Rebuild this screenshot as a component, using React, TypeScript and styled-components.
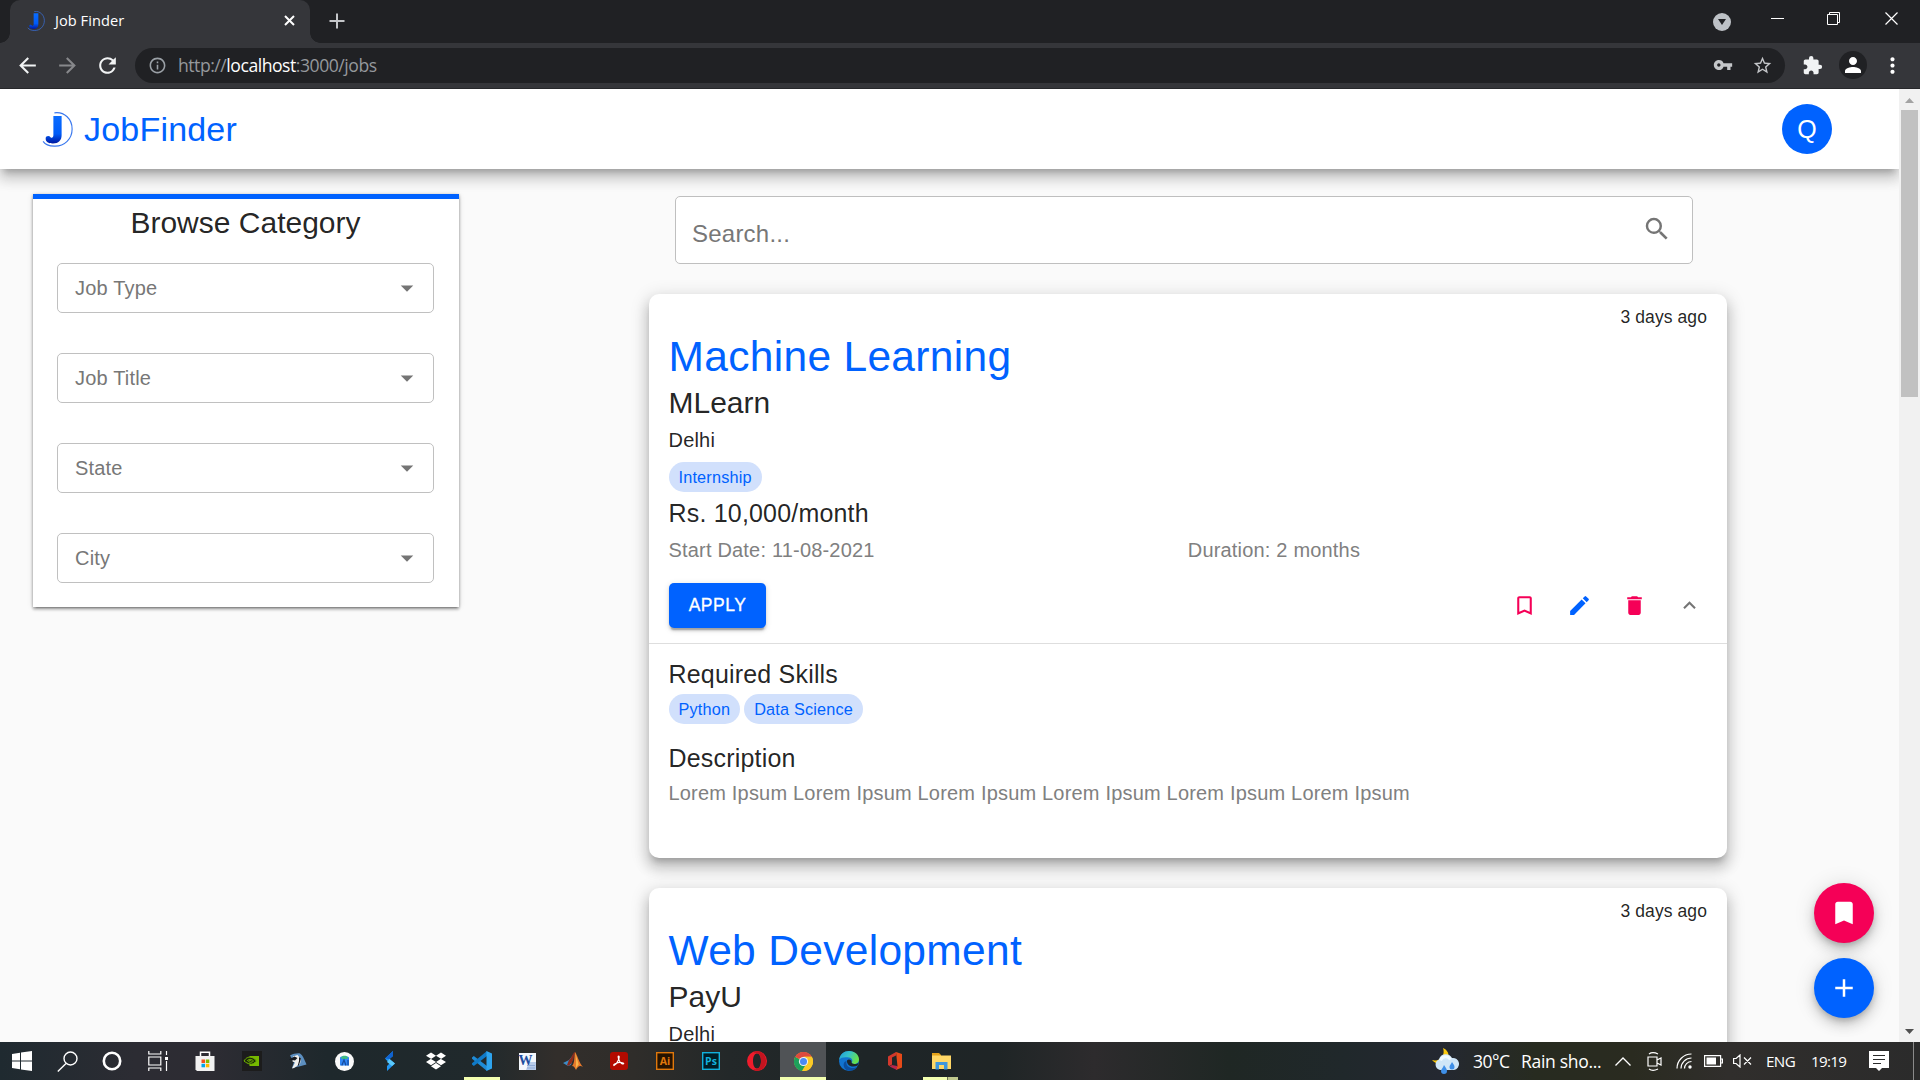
import React from "react";
import styled, { createGlobalStyle } from "styled-components";
import {
  MdAdd,
  MdArrowBack,
  MdArrowDropDown,
  MdArrowForward,
  MdBookmark,
  MdBookmarkBorder,
  MdDelete,
  MdEdit,
  MdExpandLess,
  MdExtension,
  MdInfoOutline,
  MdMoreVert,
  MdPerson,
  MdRefresh,
  MdSearch,
  MdStarBorder,
  MdVpnKey,
} from "react-icons/md";
import { FaDropbox } from "react-icons/fa";

const BLUE = "#0062ff";
const PINK = "#f50057";
const INK = "rgba(0, 0, 0, 0.87)";
const SHADOW_HIGH =
  "0 6.25px 6.25px -3.75px rgba(0,0,0,.2), 0 10px 12.5px 1.25px rgba(0,0,0,.14), 0 3.75px 17.5px 2.5px rgba(0,0,0,.12)";

const Global = createGlobalStyle`
  * { box-sizing: border-box; }
  body { margin: 0; overflow: hidden; background: #fafafa; font-family: "Liberation Sans", Arial, sans-serif; }
  svg { display: block; flex: none; }
`;

const Screen = styled.div`
  width: 1920px;
  height: 1080px;
  display: flex;
  flex-direction: column;
  overflow: hidden;
`;

/* ---------- Browser chrome ---------- */

const TabStrip = styled.div`
  height: 43px;
  flex: none;
  background: #202124;
  display: flex;
  align-items: flex-start;
  padding-left: 10px;
  font-family: "Open Sans", "Noto Sans", sans-serif;
`;

const Tab = styled.div`
  position: relative;
  width: 300px;
  height: 43px;
  background: #35363a;
  border-radius: 10px 10px 0 0;
  display: flex;
  align-items: center;
  padding: 0 15px 2px 17px;
  color: #fff;
  font-size: 14.6px;
  letter-spacing: 0.05px;

  &::before,
  &::after {
    content: "";
    position: absolute;
    bottom: 0;
    width: 10px;
    height: 10px;
  }
  &::before {
    left: -10px;
    background: radial-gradient(circle at 0 0, transparent 9.5px, #35363a 10px);
  }
  &::after {
    right: -10px;
    background: radial-gradient(circle at 100% 0, transparent 9.5px, #35363a 10px);
  }
`;

const TabTitle = styled.span`
  flex: 1;
  margin: -1px 0 0 10px;
`;

const NewTab = styled.div`
  margin: 13px 0 0 19px;
`;

const WindowControls = styled.div`
  margin-left: auto;
  height: 37px;
  display: flex;
  align-items: center;
  padding-right: 22px;
`;

const DropBadge = styled.div`
  width: 18px;
  height: 18px;
  border-radius: 50%;
  background: #bdc1c6;
  margin: 6px 40px 0 0;
  display: flex;
  align-items: center;
  justify-content: center;
`;

const Toolbar = styled.div`
  height: 46px;
  flex: none;
  background: #35363a;
  border-bottom: 1px solid #27282b;
  display: flex;
  align-items: center;
  padding: 0 15px 1px;
  color: #fff;
`;

const NavIcon = styled.div<{ $dim?: boolean }>`
  width: 24px;
  margin-right: 16px;
  color: ${(p) => (p.$dim ? "#87888b" : "#f1f3f4")};
`;

const AddressBar = styled.div`
  width: 1650px;
  height: 35px;
  border-radius: 18px;
  background: #202124;
  display: flex;
  align-items: center;
  gap: 0;
  padding: 0 12px 0 13px;
  color: #9aa0a6;
`;

const Url = styled.div`
  flex: 1;
  margin-left: 11px;
  color: #95989c;
  font: 17.6px "Open Sans", "Noto Sans", sans-serif;
  letter-spacing: -0.47px;
  white-space: nowrap;
  b {
    font-weight: 400;
    color: #fff;
  }
`;

const StarSlot = styled.div`
  margin-left: 19px;
`;

const ExtensionSlot = styled.div`
  margin-left: 17px;
`;

const Profile = styled.div`
  width: 28px;
  height: 28px;
  border-radius: 50%;
  background: #202124;
  margin: 0 13px 0 16px;
  display: flex;
  align-items: center;
  justify-content: center;
`;

/* ---------- Page ---------- */

const Viewport = styled.div`
  height: 953px;
  flex: none;
  display: flex;
  overflow: hidden;
`;

const Page = styled.div`
  position: relative;
  width: 1899px;
  height: 953px;
  overflow: hidden;
  background: #fafafa;
`;

const AppHeader = styled.header`
  position: relative;
  z-index: 2;
  height: 80px;
  background: #fff;
  box-shadow: ${SHADOW_HIGH};
  display: flex;
  align-items: center;
  padding: 0 67px 0 42px;
`;

const Brand = styled.div`
  flex: 1;
  margin-left: 11px;
  color: ${BLUE};
  font-size: 34px;
  letter-spacing: 0.2px;
`;

const Avatar = styled.div`
  width: 50px;
  height: 50px;
  border-radius: 50%;
  background: ${BLUE};
  color: #fff;
  font-size: 25px;
  display: flex;
  align-items: center;
  justify-content: center;
`;

const Content = styled.main`
  display: flex;
  align-items: flex-start;
  padding-left: 33px;
`;

const Sidebar = styled.aside`
  width: 426px;
  height: 413px;
  margin: 25px 190px 0 0;
  border-top: 5px solid ${BLUE};
  background: #fff;
  padding: 4px 25px 0 24px;
  display: flex;
  flex-direction: column;
  gap: 40px;
  box-shadow: 0 3.75px 1.25px -2.5px rgba(0,0,0,.2), 0 2.5px 2.5px 0 rgba(0,0,0,.14), 0 1.25px 6.25px 0 rgba(0,0,0,.12),
    0 1px 3px rgba(0,0,0,.3);
`;

const SidebarTitle = styled.h2`
  margin: 0 0 -20px;
  font-size: 30px;
  line-height: 40px;
  font-weight: 400;
  color: ${INK};
  text-align: center;
`;

const SelectBox = styled.div`
  height: 50px;
  flex: none;
  border: 1px solid #c0c0c0;
  border-radius: 5px;
  display: flex;
  align-items: center;
  justify-content: space-between;
  padding: 0 11px 0 17px;
  font-size: 20px;
  letter-spacing: 0.00938em;
  color: #777;
`;

const Feed = styled.section`
  width: 1078px;
  display: flex;
  flex-direction: column;
`;

const SearchBox = styled.div`
  width: 1018px;
  height: 68px;
  margin: 27px 0 30px 26px;
  border: 1px solid #bfbfbf;
  border-radius: 5px;
  background: #fff;
  display: flex;
  align-items: center;
  justify-content: space-between;
  padding: 0 20px 0 16px;
  font-size: 24px;
  letter-spacing: 0.00938em;
  line-height: 28px;
  color: #777;
  span {
    margin-top: 8px;
  }
  svg {
    margin-bottom: 2px;
  }
`;

const Card = styled.article`
  flex: none;
  height: 564px;
  margin-bottom: 30px;
  padding-top: 11px;
  border-radius: 10px;
  background: #fff;
  box-shadow: ${SHADOW_HIGH};
  color: ${INK};
`;

const Block = styled.div`
  padding: 0 20px 0 19.5px;
`;

const Posted = styled.div`
  font-size: 17.5px;
  line-height: 25px;
  letter-spacing: 0.005em;
  text-align: right;
`;

const JobTitle = styled.h1`
  margin: 1px 0 -1px;
  font-size: 42.5px;
  line-height: 52.5px;
  font-weight: 400;
  letter-spacing: 0.00735em;
  color: ${BLUE};
`;

const Company = styled.div`
  font-size: 30px;
  line-height: 40px;
`;

const Body = styled.div<{ $muted?: boolean; $top?: number }>`
  flex: 1;
  margin-top: ${(p) => p.$top ?? 0}px;
  font-size: 20px;
  line-height: 30px;
  letter-spacing: 0.00938em;
  color: ${(p) => (p.$muted ? "#808080" : "inherit")};
`;

const Subhead = styled.div<{ $top?: number }>`
  margin-top: ${(p) => p.$top ?? 0}px;
  font-size: 25px;
  line-height: 40px;
  letter-spacing: 0.0075em;
`;

const Chips = styled.div<{ $top?: number }>`
  display: flex;
  gap: 4px;
  margin-top: ${(p) => p.$top ?? 0}px;
`;

const Chip = styled.span`
  height: 30px;
  padding: 0 10px;
  border-radius: 15px;
  background: #d1e0fc;
  color: ${BLUE};
  font-size: 16.25px;
  letter-spacing: 0.18px;
  line-height: 30px;
`;

const Row = styled.div`
  display: flex;
`;

const Actions = styled.div`
  display: flex;
  align-items: center;
  margin-top: 18px;
  padding: 0 25px 0 20px;
  height: 45px;
`;

const ApplyButton = styled.button`
  width: 97px;
  height: 45px;
  margin: 0 auto 0 0;
  padding: 0;
  border: 0;
  border-radius: 5px;
  background: ${BLUE};
  color: #fff;
  font: 500 17.5px "Liberation Sans", Arial, sans-serif;
  letter-spacing: 0.02857em;
  -webkit-text-stroke: 0.3px #fff;
  box-shadow: 0 3.75px 1.25px -2.5px rgba(0,0,0,.2), 0 2.5px 2.5px rgba(0,0,0,.14), 0 1.25px 6.25px rgba(0,0,0,.12);
`;

const ActionIcon = styled.div<{ $color: string }>`
  width: 25px;
  margin-left: 30px;
  color: ${(p) => p.$color};
`;

const Details = styled.div`
  margin-top: 15px;
  padding: 10px 20px 0 19.5px;
  border-top: 1px solid #dedede;
`;

const FabStack = styled.div`
  position: absolute;
  z-index: 3;
  right: 25px;
  bottom: 24px;
  display: flex;
  flex-direction: column;
  gap: 15px;
`;

const Fab = styled.div<{ $color: string }>`
  width: 60px;
  height: 60px;
  border-radius: 50%;
  background: ${(p) => p.$color};
  color: #fff;
  display: flex;
  align-items: center;
  justify-content: center;
  box-shadow: 0 3.75px 6.25px -1.25px rgba(0,0,0,.2), 0 7.5px 12.5px 0 rgba(0,0,0,.14), 0 1.25px 22.5px 0 rgba(0,0,0,.12);
`;

const Scrollbar = styled.div`
  width: 21px;
  background: #f1f1f1;
  display: flex;
  flex-direction: column;
  align-items: center;
  padding: 9px 0 8px;
`;

const Thumb = styled.div`
  width: 17px;
  height: 287px;
  margin: 7px 0 auto;
  background: #c1c1c1;
`;

/* ---------- Taskbar ---------- */

const Taskbar = styled.footer`
  height: 38px;
  flex: none;
  display: flex;
  color: #fff;
  background: linear-gradient(
    90deg,
    #1f2a30 0,
    #2c2c33 7%,
    #2d2c33 11%,
    #1e282c 17%,
    #20292c 25%,
    #322e2b 29%,
    #2f2d2a 33%,
    #232829 38%,
    #1e2527 45%,
    #1f2526 52%,
    #2d2b2d 57%,
    #1f2724 64%,
    #20282b 70%,
    #242831 75%,
    #272b20 80%,
    #2a2b20 85%,
    #302e2c 90%,
    #2b2b2b 100%
  );
`;

const TaskItem = styled.div<{ $w?: number; $active?: boolean; $open?: boolean }>`
  width: ${(p) => p.$w ?? 46}px;
  height: 38px;
  display: flex;
  align-items: center;
  justify-content: center;
  background: ${(p) => (p.$active ? "#505356" : "transparent")};
  box-shadow: ${(p) => (p.$open || p.$active ? "inset 0 -3px #f3ffb0" : "none")};
`;

const ExplorerItem = styled(TaskItem)`
  box-shadow: none;
  background: linear-gradient(90deg, transparent 5px, #f3ffb0 5px 29px, #6d7350 29px 30px, #c0c98e 30px 40px, transparent 40px)
    0 100% / 100% 3px no-repeat;
`;

const Tray = styled.div`
  margin-left: auto;
  width: 488px;
  display: flex;
  align-items: center;
  font-family: "Open Sans", "Noto Sans", sans-serif;
  white-space: nowrap;
`;

const TrayText = styled.span<{ $size: number; $w: number; $track: number }>`
  width: ${(p) => p.$w}px;
  flex: none;
  font-size: ${(p) => p.$size}px;
  letter-spacing: ${(p) => p.$track}px;
  line-height: 24px;
`;

const TrayIcon = styled.div<{ $w: number }>`
  width: ${(p) => p.$w}px;
  flex: none;
  display: flex;
  justify-content: flex-start;
`;

const PeekLine = styled.div`
  width: 1px;
  height: 38px;
  margin-left: 24px;
  background: #8a8a8a;
`;

const Logo = ({ width, height }: { width: number; height: number }) => (
  <svg width={width} height={height} viewBox="0 0 30 34">
    <defs>
      <linearGradient id="jg" x1="0" y1="0" x2="0" y2="1">
        <stop offset="0" stopColor="#0a6cff" />
        <stop offset=".65" stopColor="#005cf8" />
        <stop offset="1" stopColor="#0018a0" />
      </linearGradient>
    </defs>
    <path d="M12 .8C22-.5 29.200 7 29.200 16.500S22 33.500 12 33.200C7 33 3 31.500 1 28.500" fill="none" stroke="#3a78ee" strokeWidth="1.100" />
    <path d="M11 4h8v18.500c0 5-3 8-8.500 8-4.500 0-7-1.500-7-4.800 0-2.600 3.500-3 4.700-1.200 1 1 2.800.8 2.800-1.800z" fill="url(#jg)" />
  </svg>
);

const s = { fill: "none", stroke: "#fff" };

const StartIcon = () => (
  <svg width="20" height="20" viewBox="0 0 20 20" fill="#fff">
    <path d="M0 3l8-1.200v7.700H0zM9 1.600L20 0v9.500H9zM0 10.500h8v7.700L0 17zM9 10.500h11V20L9 18.400z" />
  </svg>
);
const FindIcon = () => (
  <svg width="21" height="21" viewBox="0 0 21 21" {...s} strokeWidth="1.400">
    <circle cx="13.500" cy="7.500" r="6.500" />
    <path d="M9 12.500L.8 20.500" />
  </svg>
);
const CortanaIcon = () => (
  <svg width="20" height="20" viewBox="0 0 20 20" {...s} strokeWidth="2.600">
    <circle cx="10" cy="10" r="8.200" />
  </svg>
);
const TaskViewIcon = () => (
  <svg width="20" height="20" viewBox="0 0 20 20" {...s} strokeWidth="1.200">
    <path d="M.8 0v3h12V0M.8 20v-3h12v3M.8 6h12v8H.8zM18.500 0v4M18.500 10v10" />
    <path d="M17 6h3v3h-3z" fill="#fff" stroke="none" />
  </svg>
);
const StoreIcon = () => (
  <svg width="20" height="20" viewBox="0 0 20 20">
    <path d="M5.500 5V1.200h9V5" {...s} strokeWidth="1.500" />
    <path d="M.5 5h19v15H2L.5 18.500z" fill="#f2f2f2" />
    <path d="M6.500 8.500H10V12H6.500z" fill="#f25022" />
    <path d="M10.800 8.500h3.500V12h-3.500z" fill="#7fba00" />
    <path d="M6.500 12.800H10v3.500H6.500z" fill="#00a4ef" />
    <path d="M10.800 12.800h3.500v3.500h-3.500z" fill="#ffb900" />
  </svg>
);
const NvidiaIcon = () => (
  <svg width="20" height="20" viewBox="0 0 20 20">
    <path d="M0 0h20v20H0z" fill="#1c1c1c" />
    <path d="M7.500 5H17v10H7.500z" fill="#76b900" />
    <path d="M2 10c2-3.500 5-4.500 8-3.500 2 .7 3 2 4.500 3.500-2 2.500-4 3.500-6.500 3S4 11.500 2 10z" fill="#1c2b08" stroke="#76b900" />
    <path d="M5 10c1.500-2 4.500-2.300 6.500 0-2 2-4.500 1.500-5 0 1-.9 2-.9 3 0" fill="none" stroke="#76b900" />
  </svg>
);
const BirdIcon = () => (
  <svg width="18" height="16" viewBox="0 0 18 16">
    <path d="M1 2.500C4 1 8 0 11 .5c2.500 1.500 4 5 6.500 11L12 13l-9 2 2-6z" fill="#5c8fc0" />
    <path d="M4 3.500L8.500 2l3.500 4-1 5-6 4-2 .5 3-6-2.500-1z" fill="#f1f1ee" />
    <path d="M0 6.500l5.500-3 3 1.500L6 7.500zM10 4l2 1.500L10 12l-1.500 1.500L10 8z" fill="#161a20" />
  </svg>
);
const AndroidStudioIcon = () => (
  <svg width="19" height="19" viewBox="0 0 19 19">
    <circle cx="9.500" cy="9.500" r="9.500" fill="#fafafa" />
    <path d="M5 5.500c2-2 7-2 9 0v8H5z" fill="#2f86f6" />
    <path d="M6 5.500c1-2.500 6-2.500 7 0l-1 1.500H7z" fill="#3dbb84" />
    <path d="M6.800 13.500L9 8l2 5.500M13 8v5.500" fill="none" stroke="#174a9c" strokeWidth="1.200" />
  </svg>
);
const BoltIcon = () => (
  <svg width="12" height="20" viewBox="0 0 12 20">
    <path d="M9 0v5L5.500 8l5.500 4.500L3 20v-5l2.500-2.500L1 7.500z" fill="#2196f3" />
    <path d="M1 7.500L9 0v5L5.500 8z" fill="#0f62d0" />
    <path d="M5.500 8L11 12.500l-3 2.500-5-4z" fill="#5cc9fa" />
  </svg>
);
const CodeIcon = () => (
  <svg width="20" height="20" viewBox="0 0 20 20">
    <path d="M0 6.500l1.800-1.400L15 15v5L0 7.800z" fill="#1f8bd6" />
    <path d="M0 13.500l1.800 1.400L15 5V0L0 12.200z" fill="#0f7ac8" />
    <path d="M14.500 0L20 2.500v15L14.500 20z" fill="#2ea4ee" />
  </svg>
);
const WordIcon = () => (
  <svg width="19" height="19" viewBox="0 0 19 19">
    <path d="M1 1h17v17H1z" fill="#f4f7fc" />
    <path d="M11 10h7v8H8z" fill="#b9cdea" />
    <path d="M9 13.500h8M9 16h8" stroke="#8fabd8" />
    <text x="0.500" y="12.500" fontFamily="Liberation Serif, serif" fontWeight="700" fontSize="14" fill="#1f4fa0">
      W
    </text>
  </svg>
);
const MatlabIcon = () => (
  <svg width="20" height="18" viewBox="0 0 20 18">
    <path d="M0 11l6-3 5-6-3 11-3 1z" fill="#3d8bc4" />
    <path d="M6 8c3-2 4-8 6-8-1 5-2 12-7 14l-1-1z" fill="#8b2b1c" />
    <path d="M12 0c2 2 4 11 8 15-3-2-5-1-7 3-1-2-2-4-4-4 3-3 2-9 3-14z" fill="#e6792b" />
    <path d="M12.300 1c1 5 1 10 .4 16 1-2 2-4 3-4.500z" fill="#f7b64b" />
  </svg>
);
const AcrobatIcon = () => (
  <svg width="18" height="18" viewBox="0 0 18 18">
    <rect width="18" height="18" rx="3" fill="#b30b00" />
    <path d="M8.500 4c2 0-1 8-4.500 9.500-1.500-1 4-3.500 7-3 4 .7 3 2.300.5 1C9 10 7.500 4 8.500 4z" {...s} strokeWidth="1.200" />
  </svg>
);
const AdobeTile = ({ label, color, bg }: { label: string; color: string; bg: string }) => (
  <svg width="18" height="18" viewBox="0 0 18 18">
    <rect x=".7" y=".7" width="16.600" height="16.600" fill={bg} stroke={color} strokeWidth="1.400" />
    <text x="9" y="12.700" textAnchor="middle" fontFamily="Open Sans, sans-serif" fontWeight="700" fontSize="10.500" fill={color}>
      {label}
    </text>
  </svg>
);
const OperaIcon = () => (
  <svg width="20" height="20" viewBox="0 0 20 20">
    <path fillRule="evenodd" d="M10 0a10 10 0 100 20 10 10 0 000-20zm0 2.500c2.500 0 4 3.300 4 7.500s-1.500 7.500-4 7.500S6 14.200 6 10s1.500-7.500 4-7.500z" fill="#ee1c2c" />
    <path d="M10 0c12 1 12 19 0 20-2 0-3-1-3.500-2C12 19.500 14 15 14 10S12 .8 6.500 2C7.500.8 8.500 0 10 0z" fill="#c4141f" />
  </svg>
);
const ChromeIcon = () => (
  <svg width="19" height="19" viewBox="0 0 20 20">
    <circle cx="10" cy="10" r="10" fill="#fbc926" />
    <path d="M10 10L1.300 5A10 10 0 008.500 19.900L13 12z" fill="#1da05b" />
    <path d="M10 10L1.300 5A10 10 0 0118.700 5H10z" fill="#dd4b3e" />
    <path d="M10 5h8.700A10 10 0 018.500 19.900L14 12z" fill="#fbc926" />
    <circle cx="10" cy="10" r="4.800" fill="#f3f3f3" />
    <circle cx="10" cy="10" r="3.700" fill="#4a8af4" />
  </svg>
);
const EdgeIcon = () => (
  <svg width="20" height="20" viewBox="0 0 20 20">
    <defs>
      <linearGradient id="eg" x1="0" y1="0" x2="1" y2=".4">
        <stop offset="0" stopColor="#1f9ad8" />
        <stop offset=".5" stopColor="#35c1c9" />
        <stop offset="1" stopColor="#66e04e" />
      </linearGradient>
    </defs>
    <circle cx="10" cy="10" r="10" fill="#1173cf" />
    <path d="M0 9C1 3 5 0 10 0c6 0 10 4 10 8.500 0 3-2.500 4.500-5 4.500-2 0-3-1-2-2 .7-1 .5-4-3-4.500C6 6 2 6 0 9z" fill="url(#eg)" />
    <path d="M7.500 10c-1 4 2 7 6 7 2.500 0 4-.8 5-1.800C16 21 7 21.500 5 16c-1-3 0-5.500 2.500-6z" fill="#0b4e9e" />
    <path d="M8 9.500c1.500-2 4-1 4.500.5-.5 2 1 3 3 3 2 0 3-.5 4-1.300l-.8 2.800c-3 1.500-7.500 1.500-9.500-1-1-1.300-1.400-2.700-1.200-4z" fill="#1e2527" />
  </svg>
);
const OfficeIcon = () => (
  <svg width="14" height="18" viewBox="0 0 14 18">
    <path d="M0 4.500L8 0v3.500L4 5.500v7L1.500 14 0 13z" fill="#d2382c" />
    <path d="M8 0l6 2v13.500L8 18V14.500h1.500z" fill="#e64a19" />
    <path d="M1.500 14.500l2.500-1.500 5 1V18z" fill="#b8264a" />
  </svg>
);
const FolderIcon = () => (
  <svg width="19" height="18" viewBox="0 0 19 18">
    <path d="M0 1h7l2 2v4H0z" fill="#e3a21a" />
    <path d="M0 3.500h19V17H0z" fill="#ffd766" />
    <path d="M3.500 17.500V10h12v7.500H12V13H7v4.500z" fill="#3f97dd" />
  </svg>
);
const WeatherIcon = () => (
  <svg width="28" height="26" viewBox="0 0 28 26">
    <path d="M11 0c7 3 7 10 2 14-4 3-10 2-13-2 4 1 8 0 10-3s2-6 1-9z" fill="#f9c80e" />
    <path d="M8 22a5.500 5.500 0 01-1-10.500 7 7 0 0113-1.500 6 6 0 012 12z" fill="#cfe6f8" />
    <path d="M8.500 12.500a5.500 5.500 0 0110-1" stroke="#eef8ff" strokeWidth="3" fill="none" />
    <path d="M12 17c2 3 3 4 3 6a3 3 0 01-6 0c0-2 2-3 3-6zM20 14c1.500 2.500 2.500 3 2.500 5a2.500 2.500 0 01-5 0c0-2 1.500-2.500 2.500-5z" fill="#3f8fe8" />
  </svg>
);

type Offer = {
  kind: string;
  pay: string;
  start: string;
  duration: string;
  skills: string[];
  description: string;
};
type Job = { title: string; company: string; city: string; offer?: Offer };
const jobs: Job[] = [
  {
    title: "Machine Learning",
    company: "MLearn",
    city: "Delhi",
    offer: {
      kind: "Internship",
      pay: "Rs. 10,000/month",
      start: "11-08-2021",
      duration: "2 months",
      skills: ["Python", "Data Science"],
      description: "Lorem Ipsum Lorem Ipsum Lorem Ipsum Lorem Ipsum Lorem Ipsum Lorem Ipsum",
    },
  },
  { title: "Web Development", company: "PayU", city: "Delhi" },
];

const JobCard = ({ title, company, city, offer }: Job) => (
  <Card>
    <Block>
      <Posted>3 days ago</Posted>
      <JobTitle>{title}</JobTitle>
      <Company>{company}</Company>
      <Body $top={2.5}>{city}</Body>
      {offer && (
        <>
          <Chips $top={7}>
            <Chip>{offer.kind}</Chip>
          </Chips>
          <Subhead $top={1}>{offer.pay}</Subhead>
          <Row>
            <Body $muted $top={2}>{`Start Date: ${offer.start}`}</Body>
            <Body $muted $top={2}>{`Duration: ${offer.duration}`}</Body>
          </Row>
        </>
      )}
    </Block>
    {offer && (
      <>
        <Actions>
          <ApplyButton>APPLY</ApplyButton>
          <ActionIcon $color={PINK}><MdBookmarkBorder size={25} /></ActionIcon>
          <ActionIcon $color={BLUE}><MdEdit size={25} /></ActionIcon>
          <ActionIcon $color={PINK}><MdDelete size={25} /></ActionIcon>
          <ActionIcon $color="#757575"><MdExpandLess size={25} /></ActionIcon>
        </Actions>
        <Details>
          <Subhead>Required Skills</Subhead>
          <Chips>
            {offer.skills.map((skill) => (
              <Chip key={skill}>{skill}</Chip>
            ))}
          </Chips>
          <Subhead $top={14}>Description</Subhead>
          <Body $muted>{offer.description}</Body>
        </Details>
      </>
    )}
  </Card>
);

export default function App() {
  return (
    <Screen>
      <Global />
      <TabStrip>
        <Tab>
          <Logo width={18} height={20} />
          <TabTitle>Job Finder</TabTitle>
          <svg width="11" height="11" viewBox="0 0 11 11" {...s} strokeWidth="2">
            <path d="M1 1l9 9M10 1l-9 9" />
          </svg>
        </Tab>
        <NewTab>
          <svg width="16" height="16" viewBox="0 0 16 16" stroke="#c4c6c9" strokeWidth="2">
            <path d="M8 .5v15M.5 8h15" />
          </svg>
        </NewTab>
        <WindowControls>
          <DropBadge>
            <svg width="8" height="6" viewBox="0 0 8 6"><path d="M0 0h8L4 6z" fill="#202124" /></svg>
          </DropBadge>
          <svg width="13" height="1" viewBox="0 0 13 1"><path d="M0 0h13v1H0z" fill="#fff" /></svg>
          <svg width="56" height="13" viewBox="-43 0 56 13" {...s}>
            <path d="M.5 2.500h10v10H.5zM2.500 2.500v-2h10v10h-2" />
          </svg>
          <svg width="58" height="13" viewBox="-45 0 58 13" {...s} strokeWidth="1.200">
            <path d="M.5.5l12 12M12.500.5l-12 12" />
          </svg>
        </WindowControls>
      </TabStrip>
      <Toolbar>
        <NavIcon><MdArrowBack size={25} /></NavIcon>
        <NavIcon $dim><MdArrowForward size={25} /></NavIcon>
        <NavIcon><MdRefresh size={25} /></NavIcon>
        <AddressBar>
          <MdInfoOutline size={19} />
          <Url>http://<b>localhost</b>:3000/jobs</Url>
          <MdVpnKey size={20} color="#c4c6c9" />
          <StarSlot><MdStarBorder size={21} color="#c4c6c9" /></StarSlot>
        </AddressBar>
        <ExtensionSlot><MdExtension size={21} color="#f1f3f4" /></ExtensionSlot>
        <Profile><MdPerson size={24} /></Profile>
        <MdMoreVert size={25} />
      </Toolbar>
      <Viewport>
        <Page>
          <AppHeader>
            <Logo width={31} height={35} />
            <Brand>JobFinder</Brand>
            <Avatar>Q</Avatar>
          </AppHeader>
          <Content>
            <Sidebar>
              <SidebarTitle>Browse Category</SidebarTitle>
              {["Job Type", "Job Title", "State", "City"].map((label) => (
                <SelectBox key={label}>
                  {label}
                  <MdArrowDropDown size={30} color="#757575" />
                </SelectBox>
              ))}
            </Sidebar>
            <Feed>
              <SearchBox>
                <span>Search...</span>
                <MdSearch size={30} color="#757575" />
              </SearchBox>
              {jobs.map((job) => (
                <JobCard key={job.title} {...job} />
              ))}
            </Feed>
          </Content>
          <FabStack>
            <Fab $color={PINK}><MdBookmark size={30} /></Fab>
            <Fab $color={BLUE}><MdAdd size={30} /></Fab>
          </FabStack>
        </Page>
        <Scrollbar>
          <svg width="9" height="5" viewBox="0 0 9 5"><path d="M4.500 0L9 5H0z" fill="#a3a3a3" /></svg>
          <Thumb />
          <svg width="9" height="5" viewBox="0 0 9 5"><path d="M0 0h9L4.500 5z" fill="#505050" /></svg>
        </Scrollbar>
      </Viewport>
      <Taskbar>
        <TaskItem $w={44}><StartIcon /></TaskItem>
        <TaskItem><FindIcon /></TaskItem>
        <TaskItem $w={44}><CortanaIcon /></TaskItem>
        <TaskItem $w={47}><TaskViewIcon /></TaskItem>
        <TaskItem $w={48}><StoreIcon /></TaskItem>
        <TaskItem><NvidiaIcon /></TaskItem>
        <TaskItem><BirdIcon /></TaskItem>
        <TaskItem><AndroidStudioIcon /></TaskItem>
        <TaskItem><BoltIcon /></TaskItem>
        <TaskItem><FaDropbox size={20} /></TaskItem>
        <TaskItem $w={5} />
        <TaskItem $w={36} $open><CodeIcon /></TaskItem>
        <TaskItem $w={5} />
        <TaskItem $w={45}><WordIcon /></TaskItem>
        <TaskItem><MatlabIcon /></TaskItem>
        <TaskItem><AcrobatIcon /></TaskItem>
        <TaskItem><AdobeTile label="Ai" color="#e0780c" bg="#261300" /></TaskItem>
        <TaskItem><AdobeTile label="Ps" color="#12b0dc" bg="#001d26" /></TaskItem>
        <TaskItem><OperaIcon /></TaskItem>
        <TaskItem $active><ChromeIcon /></TaskItem>
        <TaskItem><EdgeIcon /></TaskItem>
        <TaskItem><OfficeIcon /></TaskItem>
        <ExplorerItem $w={47}><FolderIcon /></ExplorerItem>
        <Tray>
          <TrayIcon $w={41}><WeatherIcon /></TrayIcon>
          <TrayText $size={17.5} $w={48} $track={-0.5}>30°C</TrayText>
          <TrayText $size={17.5} $w={94} $track={-0.3}>Rain sho...</TrayText>
          <TrayIcon $w={32}>
            <svg width="16" height="9" viewBox="0 0 16 9" {...s} strokeWidth="1.300"><path d="M.5 8.500L8 1l7.500 7.500" /></svg>
          </TrayIcon>
          <TrayIcon $w={29}>
            <svg width="15" height="19" viewBox="0 0 15 19" {...s} strokeWidth="1.200">
              <path d="M1 5h9v9H1zM10 8l4-2v7l-4-2M2 2c2-1.500 6-1.500 9 0M2 17c2 1.500 6 1.500 9 0" />
            </svg>
          </TrayIcon>
          <TrayIcon $w={28}>
            <svg width="16" height="16" viewBox="0 0 16 16" {...s} strokeWidth="1.200">
              <path d="M1 15.500A14.500 14.500 0 0115.500 1M5 15.500A10.500 10.500 0 0115.500 5M8.500 15.500a7 7 0 017-7" />
              <circle cx="14" cy="14" r="1.700" fill="#fff" stroke="none" />
            </svg>
          </TrayIcon>
          <TrayIcon $w={29}>
            <svg width="19" height="12" viewBox="0 0 19 12">
              <path d="M.6.6h16v10.800H.6zM16.600 4h1.800v4h-1.800" {...s} strokeWidth="1.200" />
              <path d="M2.500 2.500h9.500v7H2.500z" fill="#fff" />
            </svg>
          </TrayIcon>
          <TrayIcon $w={33}>
            <svg width="19" height="14" viewBox="0 0 19 14" {...s} strokeWidth="1.200">
              <path d="M.6 4.500h2.500L7 1v12L3.100 9.500H.6zM11 3.500l7 7M18 3.500l-7 7" />
            </svg>
          </TrayIcon>
          <TrayText $size={15.2} $w={45} $track={-0.6}>ENG</TrayText>
          <TrayText $size={15.2} $w={58} $track={-0.7}>19:19</TrayText>
          <TrayIcon $w={20}>
            <svg width="20" height="20" viewBox="0 0 20 20">
              <path d="M0 0h20v17h-7l-3 3-3-3H0z" fill="#fff" />
              <path d="M4 4.500h12M4 8.500h12M4 12.500h8" stroke="#2b2b2b" strokeWidth="1.200" />
            </svg>
          </TrayIcon>
          <PeekLine />
        </Tray>
      </Taskbar>
    </Screen>
  );
}
